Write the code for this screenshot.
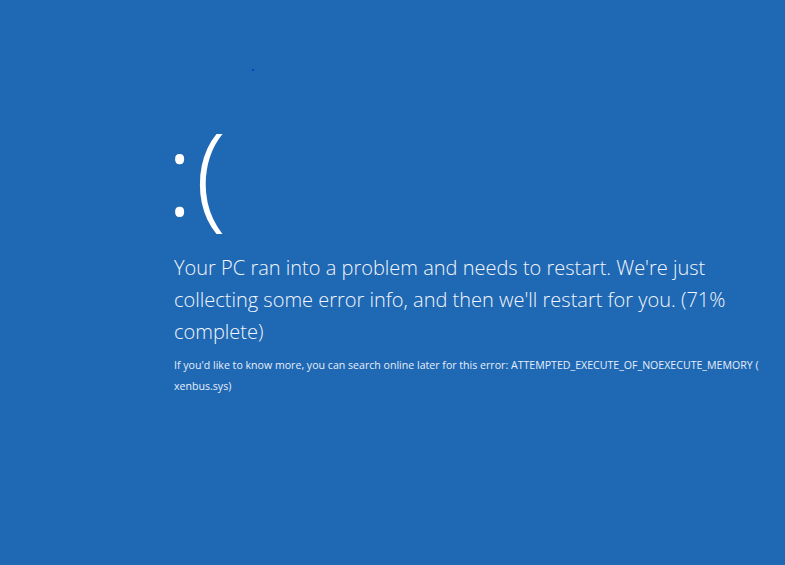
export default function App() {
  return (
    <div
      className="relative w-[785px] h-[565px] overflow-hidden bg-[#1f68b4] text-white"
      style={{ fontFamily: '"Open Sans", "Noto Sans", sans-serif' }}
    >
      {/* stray pixel */}
      <div className="absolute left-[252px] top-[69px] w-[2px] h-[2px] bg-[#0a3fd8]" />

      <div className="pl-[166px] pt-[112px] pr-[20px]">
        <div className="h-[140px] -mt-[10px] mb-[10px] text-[114px] leading-[140px] font-light tracking-[2px]">:(</div>
        <p className="mt-[3px] text-[20px] leading-[32px] font-[350] text-[#f3f6fb] max-w-[590px] pl-[8px]">
          Your PC ran into a problem and needs to restart. We're just collecting some error info, and then we'll restart for
          you. (71% complete)
        </p>
        <p className="mt-[7px] pl-[8px] text-[10.6px] leading-[21px] text-[#e6eef8] max-w-[600px]">
          If you'd like to know more, you can search online later for this error: ATTEMPTED_EXECUTE_OF_NOEXECUTE_MEMORY (
          xenbus.sys)
        </p>
      </div>
    </div>
  );
}
